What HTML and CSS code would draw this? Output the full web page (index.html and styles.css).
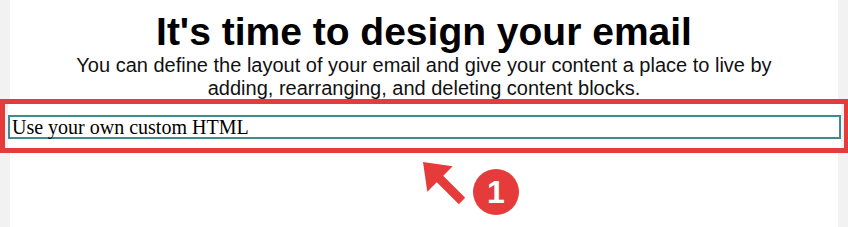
FILE: index.html
```html
<!DOCTYPE html>
<html lang="en">
<head>
    <meta charset="UTF-8">
    <meta name="viewport" content="width=device-width, initial-scale=1.0">
    <title>Design your email</title>
    <link rel="stylesheet" href="styles.css">
</head>
<body>
    <div class="page">
        <h1>It's time to design your email</h1>
        <p class="intro">You can define the layout of your email and give your content a place to live by adding, rearranging, and deleting content blocks.</p>
        <div class="highlight">
            <div class="block">Use your own custom HTML</div>
        </div>
        <svg class="callout" width="115" height="65" viewBox="0 0 115 65">
            <polygon points="8,7 12.3,36.7 37.7,11.3" fill="#e63b3b"/>
            <line x1="22" y1="21" x2="47" y2="46" stroke="#e63b3b" stroke-width="9"/>
            <circle cx="81" cy="37" r="23" fill="#e63b3b"/>
            <text x="81" y="48" text-anchor="middle" class="callout-num">1</text>
        </svg>
    </div>
</body>
</html>
```

FILE: styles.css
```css
body {
    margin: 0;
    background-color: #f2f2f2;
    font-family: "Liberation Serif", "Times New Roman", serif;
}

.page {
    position: relative;
    margin: 0 10px;
    min-height: 100vh;
    background: white;
}

h1 {
    margin: 0;
    padding-top: 9px;
    font-family: "Liberation Sans", Arial, sans-serif;
    font-size: 39px;
    line-height: 45px;
    font-weight: bold;
    text-align: center;
    color: #000;
}

.intro {
    max-width: 730px;
    margin: 0 auto;
    font-family: "Liberation Sans", Arial, sans-serif;
    font-size: 20px;
    line-height: 23px;
    text-align: center;
    color: #111;
}

.highlight {
    margin: -1px -10px 0;
    padding: 11px 3px 9px;
    border: 5px solid #e63b3b;
    border-right-width: 4px;
    background: white;
    box-shadow: inset 3px 0 #f2f2f2, inset -3px 0 #f2f2f2;
}

.block {
    border: 2px solid #3d8a90;
    padding: 0 2px;
    font-size: 20px;
    line-height: 20px;
    color: #000;
}

.callout {
    position: absolute;
    left: 405px;
    top: 155px;
}

.callout-num {
    font-family: "Liberation Sans", Arial, sans-serif;
    font-size: 32px;
    font-weight: bold;
    fill: white;
}
```
